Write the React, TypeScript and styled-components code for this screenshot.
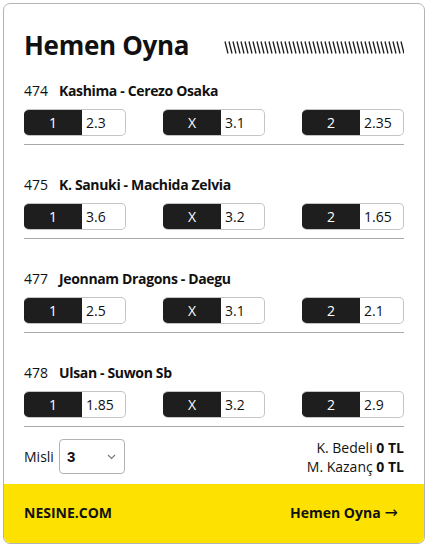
import React from "react";
import styled, { createGlobalStyle } from "styled-components";

const Global = createGlobalStyle`
  html, body { margin: 0; padding: 0; background: #fff; }
  body { font-family: "Open Sans", "Noto Sans", "Liberation Sans", sans-serif; color: #111; }
  * { box-sizing: border-box; }
`;

const Card = styled.div`
  margin: 3px;
  width: 422px;
  height: 541px;
  border: 1px solid #b4b4b4;
  border-radius: 7px;
  overflow: hidden;
  display: flex;
  flex-direction: column;
  background: #fff;
`;

const Body = styled.div`
  flex: 1;
  padding: 25px 20px 0 20px;
  display: flex;
  flex-direction: column;
`;

const Header = styled.div`
  display: flex;
  align-items: center;
  justify-content: space-between;
  height: 32px;
  margin-bottom: 20px;
`;

const Title = styled.h1`
  margin: 0;
  font-size: 26px;
  line-height: 32px;
  font-weight: 700;
  color: #111;
  letter-spacing: -0.3px;
`;

const Stripes = styled.svg`
  display: block;
  margin-top: 4px;
`;

const Match = styled.div<{ $last?: boolean }>`
  display: flex;
  flex-direction: column;
  padding-bottom: 8px;
  border-bottom: 1px solid #a9a9a9;
  margin-bottom: ${(p) => (p.$last ? "10px" : "30px")};
`;

const MatchTitle = styled.div`
  font-size: 14px;
  line-height: 20px;
  height: 20px;
  margin-bottom: 8px;
  display: flex;
  gap: 11px;
`;

const Code = styled.span`
  font-weight: 400;
`;

const Teams = styled.span`
  font-weight: 700;
  letter-spacing: -0.35px;
`;

const OddsRow = styled.div`
  display: flex;
  justify-content: space-between;
`;

const Odd = styled.div`
  display: flex;
  width: 102px;
  height: 27px;
  border: 1px solid #c4c4c4;
  border-left: none;
  border-radius: 5px;
  overflow: hidden;
  font-size: 14px;
`;

const OddLabel = styled.span`
  width: 58px;
  background: #1e1e1e;
  color: #fff;
  display: flex;
  align-items: center;
  justify-content: center;
`;

const OddValue = styled.span`
  padding-left: 4px;
  display: flex;
  align-items: center;
  color: #111;
`;

const Bottom = styled.div`
  display: flex;
  justify-content: space-between;
  align-items: center;
`;

const Misli = styled.div`
  display: flex;
  align-items: center;
  gap: 5px;
  font-size: 14px;
`;

const Select = styled.div`
  width: 66px;
  height: 35px;
  border: 1px solid #b3b3b3;
  border-radius: 4px;
  display: flex;
  align-items: center;
  justify-content: space-between;
  padding: 0 8px 0 7px;
  font-weight: 700;
  font-size: 15px;
  font-family: "Liberation Sans", Arial, sans-serif;
`;

const Totals = styled.div`
  display: flex;
  flex-direction: column;
  align-items: flex-end;
  font-size: 14px;
  line-height: 19px;
  padding-top: 1px;
`;

const Strong = styled.b`
  font-weight: 700;
`;

const Footer = styled.div`
  height: 59px;
  background: #fde100;
  display: flex;
  align-items: center;
  justify-content: space-between;
  padding: 0 26px 2px 20px;
  font-size: 14px;
  font-weight: 700;
`;

const Arrow = styled.span`
  font-family: "DejaVu Sans", sans-serif;
  font-weight: 400;
  font-size: 16px;
  margin-left: 4px;
`;

const matches = [
  { code: "474", teams: "Kashima - Cerezo Osaka", odds: ["2.3", "3.1", "2.35"] },
  { code: "475", teams: "K. Sanuki - Machida Zelvia", odds: ["3.6", "3.2", "1.65"] },
  { code: "477", teams: "Jeonnam Dragons - Daegu", odds: ["2.5", "3.1", "2.1"] },
  { code: "478", teams: "Ulsan - Suwon Sb", odds: ["1.85", "3.2", "2.9"] },
];

const labels = ["1", "X", "2"];

export default function App() {
  const lines = Array.from({ length: 45 }, (_, i) => i * 4 + 1);
  return (
    <>
      <Global />
      <Card>
        <Body>
          <Header>
            <Title>Hemen Oyna</Title>
            <Stripes width="180" height="13" viewBox="0 0 180 13">
              {lines.map((x) => (
                <line key={x} x1={x} y1={0.5} x2={x + 3} y2={12.5} stroke="#1a1a1a" strokeWidth="1.3" />
              ))}
            </Stripes>
          </Header>
          {matches.map((m, idx) => (
            <Match key={m.code} $last={idx === matches.length - 1}>
              <MatchTitle>
                <Code>{m.code}</Code>
                <Teams>{m.teams}</Teams>
              </MatchTitle>
              <OddsRow>
                {m.odds.map((o, i) => (
                  <Odd key={i}>
                    <OddLabel>{labels[i]}</OddLabel>
                    <OddValue>{o}</OddValue>
                  </Odd>
                ))}
              </OddsRow>
            </Match>
          ))}
          <Bottom>
            <Misli>
              Misli
              <Select>
                <span>3</span>
                <svg width="9" height="6" viewBox="0 0 9 6">
                  <path d="M1 1 L4.5 4.5 L8 1" fill="none" stroke="#777" strokeWidth="1.1" />
                </svg>
              </Select>
            </Misli>
            <Totals>
              <span>K. Bedeli <Strong>0 TL</Strong></span>
              <span>M. Kazanç <Strong>0 TL</Strong></span>
            </Totals>
          </Bottom>
        </Body>
        <Footer>
          <span>NESINE.COM</span>
          <span>
            Hemen Oyna<Arrow>→</Arrow>
          </span>
        </Footer>
      </Card>
    </>
  );
}
